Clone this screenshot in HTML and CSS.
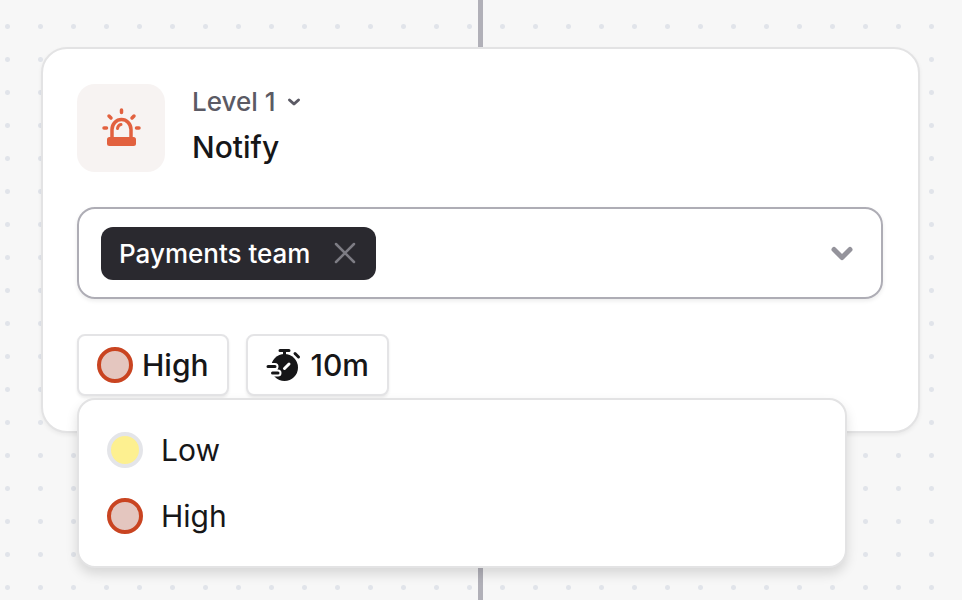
FILE: index.html
```
<!DOCTYPE html>
<html lang="en">

<head>
    <meta charset="UTF-8">
    <meta name="viewport" content="width=device-width, initial-scale=1.0">
    <title>Escalation path</title>
    <link rel="stylesheet" href="styles.css">
</head>

<body>
    <main class="canvas">
        <div class="connector connector-in"></div>
        <section class="card">
            <header class="card-header">
                <div class="card-icon">
                    <svg width="40" height="40" viewBox="0 0 40 40" fill="none" stroke="#e2613f" stroke-width="3.500" stroke-linecap="round">
                        <path d="M20.500 2v2.500M8 8l2 2M33 8l-2 2M3 20h2.500M35.500 20h2.500" />
                        <path d="M11 31v-9.500a9.500 10 0 0 1 19 0v9.500" stroke-linecap="butt" />
                        <path d="M16.500 20.500q.5-3.500 3.500-4" stroke-width="3" />
                        <rect x="6" y="29" width="29" height="9" rx="2.500" fill="#e2613f" stroke="none" />
                    </svg>
                </div>
                <div class="card-title">
                    <button type="button" class="level">Level 1
                        <svg width="14" height="10" viewBox="0 0 14 10" fill="none" stroke="#5b5a64" stroke-width="3" stroke-linecap="round" stroke-linejoin="round">
                            <path d="M2.500 3l4.500 4 4.500-4" />
                        </svg>
                    </button>
                    <h1>Notify</h1>
                </div>
            </header>

            <div class="select">
                <span class="tag">Payments team
                    <button type="button" class="tag-remove" aria-label="Remove Payments team">
                        <svg width="22" height="22" viewBox="0 0 22 22" fill="none" stroke="#7d7c84" stroke-width="2.500" stroke-linecap="round">
                            <path d="M2 2l18 18M20 2L2 20" />
                        </svg>
                    </button>
                </span>
                <button type="button" class="select-toggle" aria-label="Show options">
                    <svg width="22" height="16" viewBox="0 0 22 16" fill="none" stroke="#94939b" stroke-width="5" stroke-linecap="round" stroke-linejoin="round">
                        <path d="M3 4.500l8 8 8-8" />
                    </svg>
                </button>
            </div>

            <div class="options">
                <div class="dropdown">
                    <button type="button" class="option" aria-expanded="true"><span class="dot dot-high"></span>High</button>
                    <ul class="menu">
                        <li><button type="button" class="menu-item"><span class="dot dot-low"></span>Low</button></li>
                        <li><button type="button" class="menu-item"><span class="dot dot-high"></span>High</button></li>
                    </ul>
                </div>
                <button type="button" class="option">
                    <svg width="36" height="36" viewBox="0 0 36 36" fill="none" stroke-linecap="round">
                        <circle cx="18.500" cy="20.500" r="13.500" fill="#161618" />
                        <path d="M14 3.500h9M18.500 4v4" stroke="#161618" stroke-width="3" />
                        <path d="M29 6.500l3.500 3.500" stroke="#161618" stroke-width="3" />
                        <path d="M18.500 21.500l4.500-4.500" stroke="#fff" stroke-width="3" />
                        <path d="M2 19.500h7M6.500 26h5.500" stroke="#fff" stroke-width="7" />
                        <path d="M2 19.500h7M6.500 26h5.500" stroke="#161618" stroke-width="3" />
                    </svg>
                    10m
                </button>
            </div>
        </section>
        <div class="connector"></div>
    </main>
</body>

</html>
```
FILE: styles.css
```
* {
    box-sizing: border-box;
}

body {
    margin: 0;
    background-color: #f7f7f7;
    background-image: radial-gradient(circle, #e1e4ea 2px, transparent 3px);
    background-size: 33px 33px;
    background-position: -9px 10px;
    font-family: "Inter", sans-serif;
    color: #161618;
}

button {
    margin: 0;
    padding: 0;
    border: none;
    background: none;
    font: inherit;
    color: inherit;
    cursor: pointer;
}

svg {
    display: block;
    flex: none;
}

.canvas {
    display: flex;
    flex-direction: column;
    align-items: center;
    min-height: 100vh;
    padding: 0 42px 0 41px;
}

.connector {
    flex: 1;
    width: 5px;
    background-color: #b1b0b8;
}

.connector-in {
    flex: none;
    height: 47px;
}

.card {
    display: flex;
    flex-direction: column;
    gap: 35px;
    width: 100%;
    padding: 35px 35px 35px 34px;
    background-color: #fff;
    border: 2px solid #e3e3e4;
    border-radius: 26px;
    box-shadow: 0 2px 4px rgba(0, 0, 0, 0.06);
}

.card-header {
    display: flex;
    align-items: flex-start;
    gap: 27px;
}

.card-icon {
    display: flex;
    align-items: center;
    justify-content: center;
    width: 88px;
    height: 88px;
    background-color: #f7f3f2;
    border-radius: 18px;
}

.card-title {
    display: flex;
    flex-direction: column;
    align-items: flex-start;
    gap: 7px;
}

.level {
    display: flex;
    align-items: center;
    gap: 12px;
    font-size: 26px;
    font-weight: 500;
    line-height: 36px;
    color: #5b5a64;
}

h1 {
    margin: 0;
    font-size: 30px;
    font-weight: 500;
    line-height: 40px;
}

.select {
    display: flex;
    align-items: center;
    justify-content: space-between;
    height: 92px;
    padding: 0 28px 0 22px;
    border: 2px solid #aeadb5;
    border-radius: 18px;
    box-shadow: 0 2px 4px rgba(0, 0, 0, 0.08);
}

.tag {
    display: flex;
    align-items: center;
    gap: 24px;
    height: 53px;
    padding: 0 20px 0 18px;
    background-color: #2a292f;
    border-radius: 12px;
    font-size: 26px;
    font-weight: 500;
    color: #fff;
}

.options {
    display: flex;
    gap: 17px;
}

.dropdown {
    position: relative;
}

.option {
    display: flex;
    align-items: center;
    gap: 9px;
    height: 62px;
    padding: 0 18px;
    background-color: #fff;
    border: 2px solid #e4e4e6;
    border-radius: 8px;
    box-shadow: 0 2px 3px rgba(0, 0, 0, 0.08);
    font-size: 30px;
    font-weight: 500;
}

.dot {
    width: 36px;
    height: 36px;
    border: 4px solid;
    border-radius: 50%;
}

.dot-high {
    background-color: #e4c6bf;
    border-color: #c94421;
}

.dot-low {
    background-color: #fdf090;
    border-color: #e4e5e9;
}

/* hangs just under the severity button, over the card's edge */
.menu {
    position: absolute;
    top: 64px;
    left: 0;
    z-index: 1;
    width: calc(100vw - 192px);
    margin: 0;
    padding: 17px 0;
    list-style: none;
    background-color: #fff;
    border: 2px solid #e3e3e4;
    border-radius: 18px;
    box-shadow: 0 6px 12px rgba(0, 0, 0, 0.13);
}

.menu-item {
    display: flex;
    align-items: center;
    gap: 18px;
    width: 100%;
    height: 66px;
    padding: 0 28px;
    font-size: 30px;
    font-weight: 400;
}
```
